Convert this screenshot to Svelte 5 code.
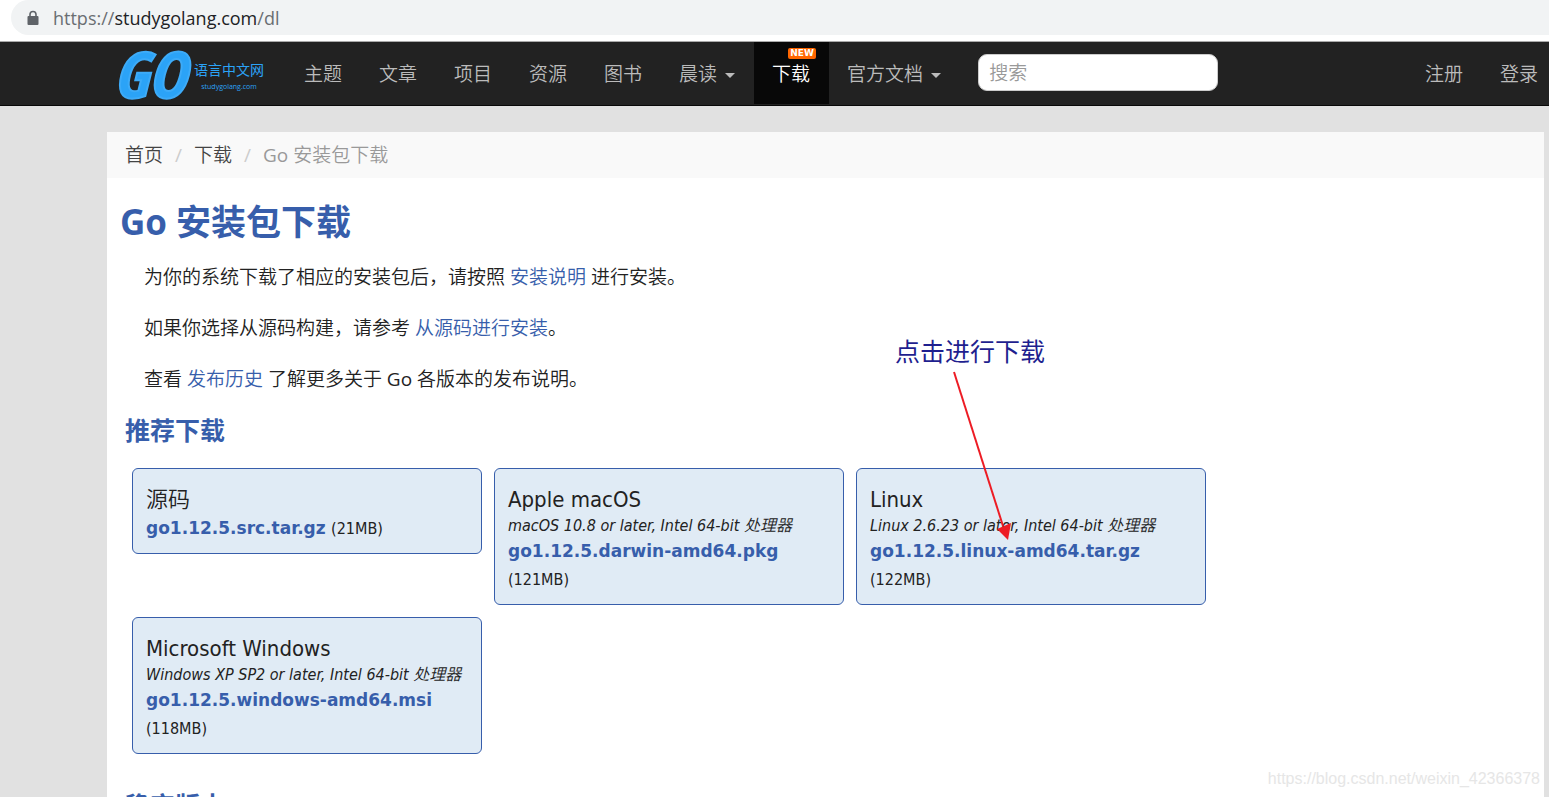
<script lang="ts">
	const navItems = [
		{ name: '主题', href: '/topics' },
		{ name: '文章', href: '/articles' },
		{ name: '项目', href: '/projects' },
		{ name: '资源', href: '/resources' },
		{ name: '图书', href: '/books' },
		{ name: '晨读', href: '/readings', caret: true },
		{ name: '下载', href: '/dl', active: true, isNew: true },
		{ name: '官方文档', href: '/docs', caret: true }
	];

	const downloads = [
		{ name: '源码', system: '', file: 'go1.12.5.src.tar.gz', size: '21MB' },
		{
			name: 'Apple macOS',
			system: 'macOS 10.8 or later, Intel 64-bit 处理器',
			file: 'go1.12.5.darwin-amd64.pkg',
			size: '121MB'
		},
		{
			name: 'Linux',
			system: 'Linux 2.6.23 or later, Intel 64-bit 处理器',
			file: 'go1.12.5.linux-amd64.tar.gz',
			size: '122MB'
		},
		{
			name: 'Microsoft Windows',
			system: 'Windows XP SP2 or later, Intel 64-bit 处理器',
			file: 'go1.12.5.windows-amd64.msi',
			size: '118MB'
		}
	];
</script>

<div class="page">
	<div class="browser-bar">
		<div class="address">
			<svg class="lock" viewBox="0 0 12 16" width="12" height="16" aria-hidden="true">
				<path d="M3 7V4.5a3 3 0 0 1 6 0V7" fill="none" stroke="#5f6368" stroke-width="1.6" />
				<rect x="0.5" y="6" width="11" height="9" rx="1" fill="#5f6368" />
			</svg>
			<span>https://<b>studygolang.com</b>/dl</span>
		</div>
	</div>

	<header class="navbar">
		<a class="logo" href="/">
			<span class="logo-go">GO</span>
			<span class="logo-text">
				<span class="logo-name">语言中文网</span>
				<span class="logo-domain">studygolang.com</span>
			</span>
		</a>
		<nav>
			{#each navItems as item (item.name)}
				<a href={item.href} class="nav-link" class:active={item.active}>
					{item.name}
					{#if item.caret}<i class="caret"></i>{/if}
					{#if item.isNew}<span class="badge">NEW</span>{/if}
				</a>
			{/each}
		</nav>
		<form class="search" role="search">
			<input type="text" placeholder="搜索" aria-label="搜索" />
		</form>
		<div class="account">
			<a href="/account/register" class="nav-link">注册</a>
			<a href="/account/login" class="nav-link">登录</a>
		</div>
	</header>

	<main>
		<ol class="breadcrumb">
			<li><a href="/">首页</a></li>
			<li><a href="/dl">下载</a></li>
			<li>Go 安装包下载</li>
		</ol>

		<h1>Go 安装包下载</h1>
		<div class="intro">
			<p>为你的系统下载了相应的安装包后，请按照 <a href="/doc/install">安装说明</a> 进行安装。</p>
			<p>如果你选择从源码构建，请参考 <a href="/doc/source">从源码进行安装</a>。</p>
			<p>查看 <a href="/doc/history">发布历史</a> 了解更多关于 Go 各版本的发布说明。</p>
		</div>

		<h2>推荐下载</h2>
		<div class="downloads">
			{#each downloads as item (item.file)}
				<div class="card">
					<div class="platform">{item.name}</div>
					{#if item.system}<div class="system">{item.system}</div>{/if}
					<div class="file">
						<a href={`/dl/golang/${item.file}`}>{item.file}</a>
						<span class="size">({item.size})</span>
					</div>
				</div>
			{/each}
		</div>

		<h2>稳定版本</h2>
	</main>

	<!-- NOTE AND ARROW OVER THE LINUX PACKAGE -->
	<div class="note">点击进行下载</div>
	<svg class="arrow" viewBox="0 0 60 172" width="60" height="172" aria-hidden="true">
		<path d="M2 2L51 156" stroke="#ed1c24" stroke-width="2" />
		<path d="M56 170L45 159L59 153Z" fill="#ed1c24" />
	</svg>
	<div class="watermark">https://blog.csdn.net/weixin_42366378</div>
</div>

<style>
	:global(body) {
		margin: 0;
		background: #e1e1e1;
	}

	.page {
		position: relative;
		height: 100vh;
		overflow: hidden;
		font-family: 'Open Sans', 'Noto Sans CJK SC DemiLight', 'Noto Sans CJK SC', sans-serif;
		font-size: 19px;
		color: #222;
	}

	a {
		color: #375eab;
		text-decoration: none;
	}

	/* BROWSER ADDRESS BAR */
	.browser-bar {
		height: 42px;
		padding-left: 11px;
		background: #fff;
		border-bottom: 1px solid #aaa;
		box-sizing: border-box;
	}

	.address {
		display: flex;
		align-items: center;
		gap: 14px;
		height: 35px;
		padding-left: 16px;
		border-radius: 18px 0 0 18px;
		background: #f1f3f4;
		color: #6a6e72;
		font-size: 18px;
	}

	.address b {
		font-weight: normal;
		color: #202124;
	}

	/* TOP NAVIGATION */
	.navbar {
		display: flex;
		align-items: center;
		height: 63px;
		padding-left: 113px;
		background: #222;
		border-bottom: 1px solid #080808;
	}

	.logo {
		display: flex;
		align-items: center;
		width: 173px;
		color: #2ba3f7;
	}

	.logo-go {
		width: 81px;
		font: italic bold 64px/63px 'Open Sans Condensed', 'Liberation Sans', sans-serif;
		-webkit-text-stroke: 2px #3dabf8;
	}

	.logo-text {
		display: flex;
		flex-direction: column;
		align-items: center;
		padding-top: 6px;
		white-space: nowrap;
		font-family: 'Open Sans', 'Noto Sans CJK SC', sans-serif;
	}

	.logo-name {
		font-size: 14px;
		line-height: 20px;
	}

	.logo-domain {
		font-size: 7px;
		line-height: 14px;
	}

	nav,
	.account {
		display: flex;
		height: 100%;
	}

	.nav-link {
		position: relative;
		display: flex;
		align-items: center;
		gap: 8px;
		height: 62px;
		padding: 0 19px 0 18px;
		color: #bbb;
		white-space: nowrap;
	}

	.nav-link.active {
		background: #080808;
		color: #fff;
	}

	.caret {
		border: 5px solid transparent;
		border-top-color: #bbb;
		border-bottom: 0;
		margin-top: 4px;
	}

	.badge {
		position: absolute;
		top: 6px;
		right: 13px;
		width: 28px;
		border-radius: 2px;
		background: #f60;
		color: #fff;
		font: bold 9px/11px 'DejaVu Sans', sans-serif;
		text-align: center;
	}

	.search {
		margin-left: 18px;
		padding-bottom: 2px;
	}

	.search input {
		width: 240px;
		height: 37px;
		padding: 0 10px;
		border: 1px solid #ccc;
		border-radius: 9px;
		box-sizing: border-box;
		background: #fff;
		font: inherit;
	}

	.search input::placeholder {
		color: #999;
	}

	.account {
		margin-left: auto;
		margin-right: -8px;
	}

	/* MAIN CONTENT */
	main {
		margin: 26px 5px 0 107px;
		background: #fff;
	}

	.breadcrumb {
		display: flex;
		margin: 0;
		padding: 0 18px;
		background: #f9f9f9;
		line-height: 46px;
		list-style: none;
		color: #999;
	}

	.breadcrumb a {
		color: #444;
	}

	.breadcrumb li + li::before {
		content: '/';
		padding: 0 12px;
		color: #ccc;
	}

	h1,
	h2 {
		margin: 0;
		font-family: 'Open Sans', 'Noto Sans CJK SC', sans-serif;
		color: #375eab;
	}

	h1 {
		padding: 20px 13px 0;
		font-size: 35px;
		line-height: 48px;
	}

	.intro {
		padding: 17px 37px 0;
	}

	.intro p {
		margin: 0 0 23px;
		line-height: 28px;
	}

	h2 {
		padding: 0 18px;
		font-size: 25px;
		line-height: 28px;
	}

	.downloads {
		display: flex;
		flex-wrap: wrap;
		align-items: flex-start;
		gap: 12px;
		padding: 24px 25px 37px;
	}

	.card {
		width: 350px;
		padding: 16px 13px 11px;
		border: 1px solid #375eab;
		border-radius: 6px;
		box-sizing: border-box;
		background: #e0ebf5;
		font-family: 'DejaVu Sans Condensed', 'Noto Sans CJK SC DemiLight', 'Noto Sans CJK SC', sans-serif;
	}

	.platform {
		font-size: 22px;
		line-height: 29px;
	}

	.system {
		font-size: 16px;
		line-height: 23px;
		font-style: italic;
		white-space: nowrap;
	}

	.file {
		line-height: 27px;
	}

	.file a {
		font: bold 17px/27px 'DejaVu Sans', sans-serif;
	}

	.size {
		font-size: 16px;
	}

	/* OVERLAYS */
	.note {
		position: absolute;
		top: 332px;
		left: 895px;
		color: #1f1f8f;
		font-family: 'Noto Sans CJK SC', sans-serif;
		font-size: 25px;
		line-height: 36px;
	}

	.arrow {
		position: absolute;
		top: 370px;
		left: 952px;
	}

	.watermark {
		position: absolute;
		right: 9px;
		bottom: 8px;
		color: #e6e6e6;
		font: 16px/20px 'Liberation Sans', sans-serif;
	}
</style>
